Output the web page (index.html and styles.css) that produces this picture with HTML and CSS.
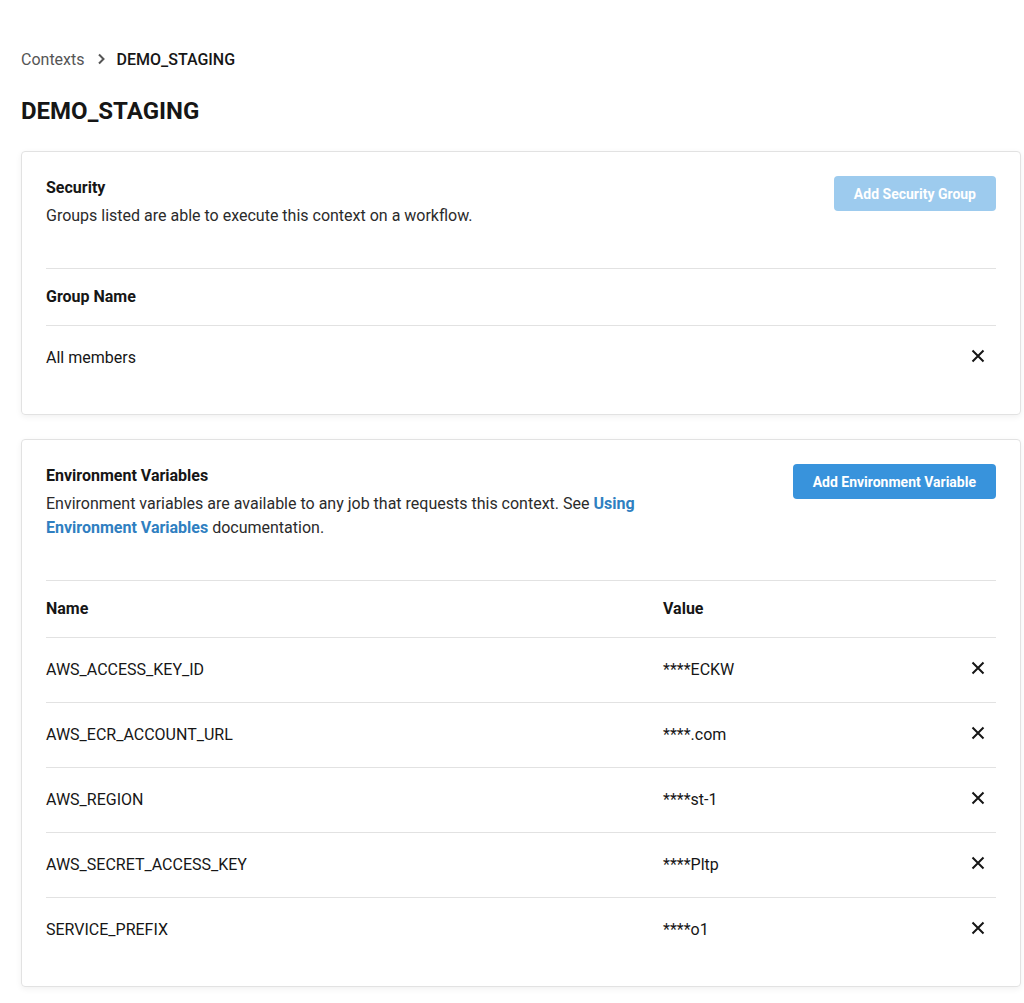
FILE: index.html
```html
<!DOCTYPE html>
<html lang="en">
<head>
<meta charset="utf-8">
<title>DEMO_STAGING</title>
<link rel="stylesheet" href="styles.css">
</head>
<body>
<main class="page">
  <nav class="crumbs">
    <a class="crumb-link" href="#">Contexts</a>
    <svg class="chev" width="10" height="12" viewBox="0 0 10 12"><path d="M3 1.5 L7.5 6 L3 10.5" fill="none" stroke="#555" stroke-width="2"/></svg>
    <span class="crumb-current">DEMO_STAGING</span>
  </nav>
  <h1 class="title">DEMO_STAGING</h1>

  <section class="card">
    <div class="card-head">
      <div class="head-text">
        <h2 class="card-title">Security</h2>
        <p class="card-desc">Groups listed are able to execute this context on a workflow.</p>
      </div>
      <button class="btn btn-disabled" disabled>Add Security Group</button>
    </div>
    <div class="table sec-table">
      <div class="row head-row"><div class="cell">Group Name</div><div class="cell"></div></div>
      <div class="row"><div class="cell">All members</div><div class="cell act"><svg class="x" viewBox="0 0 14 14"><path d="M1.5 1.5 L12.5 12.5 M12.5 1.5 L1.5 12.5"/></svg></div></div>
    </div>
  </section>

  <section class="card">
    <div class="card-head">
      <div class="head-text">
        <h2 class="card-title">Environment Variables</h2>
        <p class="card-desc narrow">Environment variables are available to any job that requests this context. See <a class="link" href="#">Using Environment Variables</a> documentation.</p>
      </div>
      <button class="btn">Add Environment Variable</button>
    </div>
    <div class="table env-table">
      <div class="row head-row"><div class="cell">Name</div><div class="cell">Value</div><div class="cell"></div></div>
      <div class="row"><div class="cell">AWS_ACCESS_KEY_ID</div><div class="cell">****ECKW</div><div class="cell act"><svg class="x" viewBox="0 0 14 14"><path d="M1.5 1.5 L12.5 12.5 M12.5 1.5 L1.5 12.5"/></svg></div></div>
      <div class="row"><div class="cell">AWS_ECR_ACCOUNT_URL</div><div class="cell">****.com</div><div class="cell act"><svg class="x" viewBox="0 0 14 14"><path d="M1.5 1.5 L12.5 12.5 M12.5 1.5 L1.5 12.5"/></svg></div></div>
      <div class="row"><div class="cell">AWS_REGION</div><div class="cell">****st-1</div><div class="cell act"><svg class="x" viewBox="0 0 14 14"><path d="M1.5 1.5 L12.5 12.5 M12.5 1.5 L1.5 12.5"/></svg></div></div>
      <div class="row"><div class="cell">AWS_SECRET_ACCESS_KEY</div><div class="cell">****Pltp</div><div class="cell act"><svg class="x" viewBox="0 0 14 14"><path d="M1.5 1.5 L12.5 12.5 M12.5 1.5 L1.5 12.5"/></svg></div></div>
      <div class="row"><div class="cell">SERVICE_PREFIX</div><div class="cell">****o1</div><div class="cell act"><svg class="x" viewBox="0 0 14 14"><path d="M1.5 1.5 L12.5 12.5 M12.5 1.5 L1.5 12.5"/></svg></div></div>
    </div>
  </section>
</main>
</body>
</html>
```

FILE: styles.css
```css
* { box-sizing: border-box; }
html, body { margin: 0; background: #fff; }
body {
  font-family: Roboto, "Liberation Sans", Arial, sans-serif;
  color: #161616;
  font-size: 16px;
}
.page {
  padding: 47px 3px 16px 21px;
}
.crumbs {
  display: flex;
  align-items: center;
  gap: 11px;
  height: 24px;
  font-size: 16px;
}
.crumb-link { color: #555; text-decoration: none; }
.crumb-current { font-weight: 500; color: #161616; }
.chev { display: block; }
.title {
  margin: 25px 0 25px;
  font-size: 24px;
  line-height: 30px;
  font-weight: 700;
}
.card {
  border: 1px solid #e2e2e2;
  border-radius: 4px;
  box-shadow: 0 2px 6px rgba(0,0,0,0.06);
  padding: 24px;
  margin-bottom: 24px;
}
.card-head {
  display: flex;
  justify-content: space-between;
  align-items: flex-start;
  margin-bottom: 40px;
}
.card-title {
  margin: 1px 0 5px;
  font-size: 16px;
  line-height: 22px;
  font-weight: 700;
}
.card-desc {
  margin: 0;
  font-size: 16px;
  line-height: 24px;
  color: #2b2b2b;
}
.narrow { max-width: 600px; }
.link { color: #2f7fc1; font-weight: 700; text-decoration: none; }
.btn {
  height: 35px;
  padding: 0 20px;
  border: none;
  border-radius: 4px;
  background: #3893dc;
  color: #fff;
  font-family: inherit;
  font-size: 14px;
  font-weight: 700;
  white-space: nowrap;
}
.btn-disabled { background: #9dcbee; }
.row {
  display: grid;
  align-items: center;
  border-top: 1px solid #e2e2e2;
  height: 65px;
}
.sec-table .row { grid-template-columns: 1fr 40px; }
.env-table .row { grid-template-columns: 617px 1fr 40px; }
.row.head-row { height: 57px; font-weight: 700; }
.cell { line-height: 20px; }
.act { display: flex; justify-content: flex-end; padding-right: 11px; padding-bottom: 4px; }
.x {
  width: 14px;
  height: 14px;
  fill: none;
  stroke: #161616;
  stroke-width: 2;
}
```
